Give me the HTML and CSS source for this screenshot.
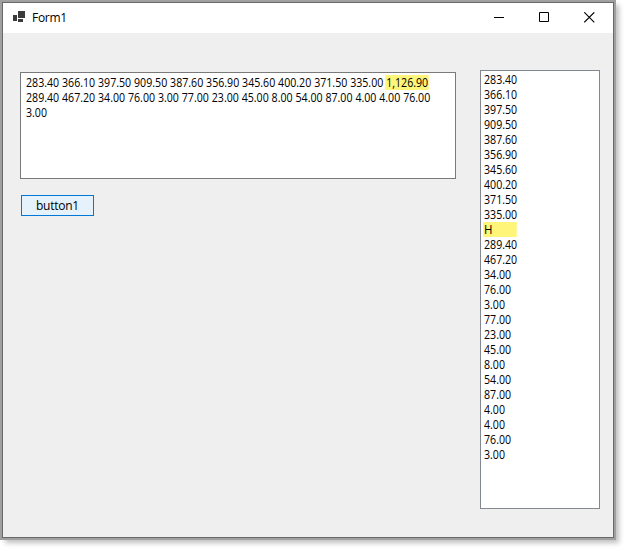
FILE: index.html
```
<!DOCTYPE html>
<html lang="en">
<head>
<meta charset="utf-8">
<title>Form1</title>
<link rel="stylesheet" href="styles.css">
</head>
<body>
<main class="window">
  <div class="frame">
    <header class="titlebar">
      <svg class="app-icon" width="13" height="12" viewBox="0 0 13 12"><path d="M5 0h7v7H5zM0 4h4v6H0zM5 8h5v3H5z" fill="#3b3b3d"/></svg>
      <h1 class="title">Form1</h1>
      <div class="controls">
        <svg width="12" height="12" viewBox="0 0 12 12"><path d="M0 5.5h10" stroke="#000"/></svg>
        <svg width="12" height="12" viewBox="0 0 12 12"><path d="M.5.5h9v9h-9z" fill="none" stroke="#000"/></svg>
        <svg width="12" height="12" viewBox="0 0 12 12"><path d="M.3.3l10 10M10.3.3l-10 10" stroke="#000" stroke-width="1.1"/></svg>
      </div>
    </header>
    <section class="client">
      <div class="left">
        <div class="textbox"><div class="numbers">283.40 366.10 397.50 909.50 387.60 356.90 345.60 400.20 371.50 335.00 <mark class="total">1,126.90</mark>
289.40 467.20 34.00 76.00 3.00 77.00 23.00 45.00 8.00 54.00 87.00 4.00 4.00 76.00
3.00</div></div>
        <button class="button"><span>button1</span></button>
      </div>
      <div class="listbox"><div class="numbers">283.40
366.10
397.50
909.50
387.60
356.90
345.60
400.20
371.50
335.00
<mark class="row">H</mark>
289.40
467.20
34.00
76.00
3.00
77.00
23.00
45.00
8.00
54.00
87.00
4.00
4.00
76.00
3.00</div></div>
    </section>
  </div>
</main>
</body>
</html>
```
FILE: styles.css
```
* { box-sizing: border-box; }
body {
  margin: 0;
  min-height: 551px;
  background: #fff;
  color: #000;
  font: 12px/15px "Open Sans", "Noto Sans", sans-serif;
}
.window {
  width: 616px;
  height: 540px;
  padding: 2px;
  background: #a0a0a0;
  box-shadow: 4px 4px 5px -1px rgba(0, 0, 0, .25);
}
.frame {
  display: flex;
  flex-direction: column;
  height: 536px;
  border: 1px solid #696969;
  background: #efefef;
}
.titlebar {
  display: flex;
  height: 30px;
  padding: 8px 17px 0 10px;
  background: #fff;
}
.title {
  margin: -1px 0 0 6px;
  font-size: 12px;
  font-weight: 400;
  line-height: 15px;
  letter-spacing: -.3px;
}
.controls {
  display: flex;
  gap: 33px;
  margin: 1px 0 0 auto;
}
.client {
  display: flex;
  justify-content: space-between;
  padding: 37px 13px 0 17px;
}
.left { padding-top: 2px; }
.textbox {
  width: 436px;
  height: 107px;
  padding: 2px 5px;
  border: 1px solid #7a7a7a;
  background: #fff;
}
.numbers {
  width: max-content;
  white-space: pre;
  word-spacing: .12px;
  transform: scaleX(.885);
  transform-origin: 0 0;
}
.listbox {
  width: 120px;
  height: 439px;
  padding: 1px 3px;
  border: 1px solid #828790;
  background: #fff;
}
mark {
  display: inline-block;
  height: 15px;
  vertical-align: top;
  background: #fff578;
  color: inherit;
}
.total { box-shadow: -1px 0 #fff578, 1px 0 #fff578; }
.row {
  width: 37px;
  font-size: 13px;
  box-shadow: -1px 0 #fff578;
}
.button {
  display: block;
  width: 73px;
  height: 21px;
  margin: 16px 0 0 1px;
  padding: 0;
  border: 1px solid #0078d7;
  background: #e5f1fb;
  color: #000;
  font: inherit;
}
.button span {
  display: block;
  letter-spacing: -.25px;
}
```
